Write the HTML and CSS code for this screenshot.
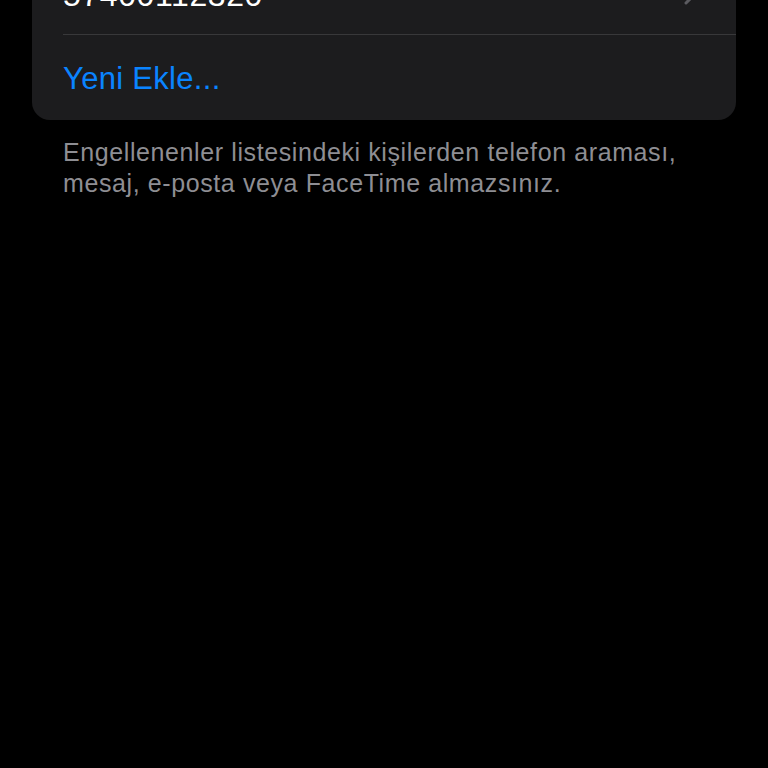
FILE: index.html
```html
<!DOCTYPE html>
<html>
  <head>
    <meta charset="utf-8">
    <link rel="stylesheet" href="styles.css">
  </head>
  <body>
    <div class="group">
      <div class="row">
        <span class="number">57400112320</span>
        <svg class="chevron" width="12" height="20" viewBox="0 0 12 20">
          <path d="M2 2 L10 10 L2 18" fill="none" stroke="#5b5b60" stroke-width="3" stroke-linecap="round" stroke-linejoin="round"/>
        </svg>
      </div>
      <div class="row add">
        <span class="link">Yeni Ekle...</span>
      </div>
    </div>
    <p class="footnote">Engellenenler listesindeki kişilerden telefon araması,<br>mesaj, e-posta veya FaceTime almazsınız.</p>
  </body>
</html>
```

FILE: styles.css
```css
body {
  margin: 0;
  background: #000;
  font-family: "Liberation Sans", Arial, sans-serif;
}

.group {
  margin: -52px 32px 0 32px;
  background: #1c1c1e;
  border-radius: 18px;
  overflow: hidden;
}

.row {
  height: 86px;
  margin-left: 31px;
  padding-right: 40px;
  display: flex;
  align-items: center;
  justify-content: space-between;
}

.row + .row {
  border-top: 1px solid #38383a;
  height: 85px;
}

.number {
  color: #fff;
  font-size: 32px;
  letter-spacing: 0.6px;
  position: relative;
  top: 4px;
}

.chevron {
  position: relative;
  top: 4px;
}

.link {
  color: #0a84ff;
  font-size: 31px;
  letter-spacing: 0.3px;
  position: relative;
  top: 1px;
}

.footnote {
  margin: 17px 0 0 63px;
  color: #8e8e93;
  font-size: 25px;
  line-height: 31px;
  letter-spacing: 0.6px;
}
```
